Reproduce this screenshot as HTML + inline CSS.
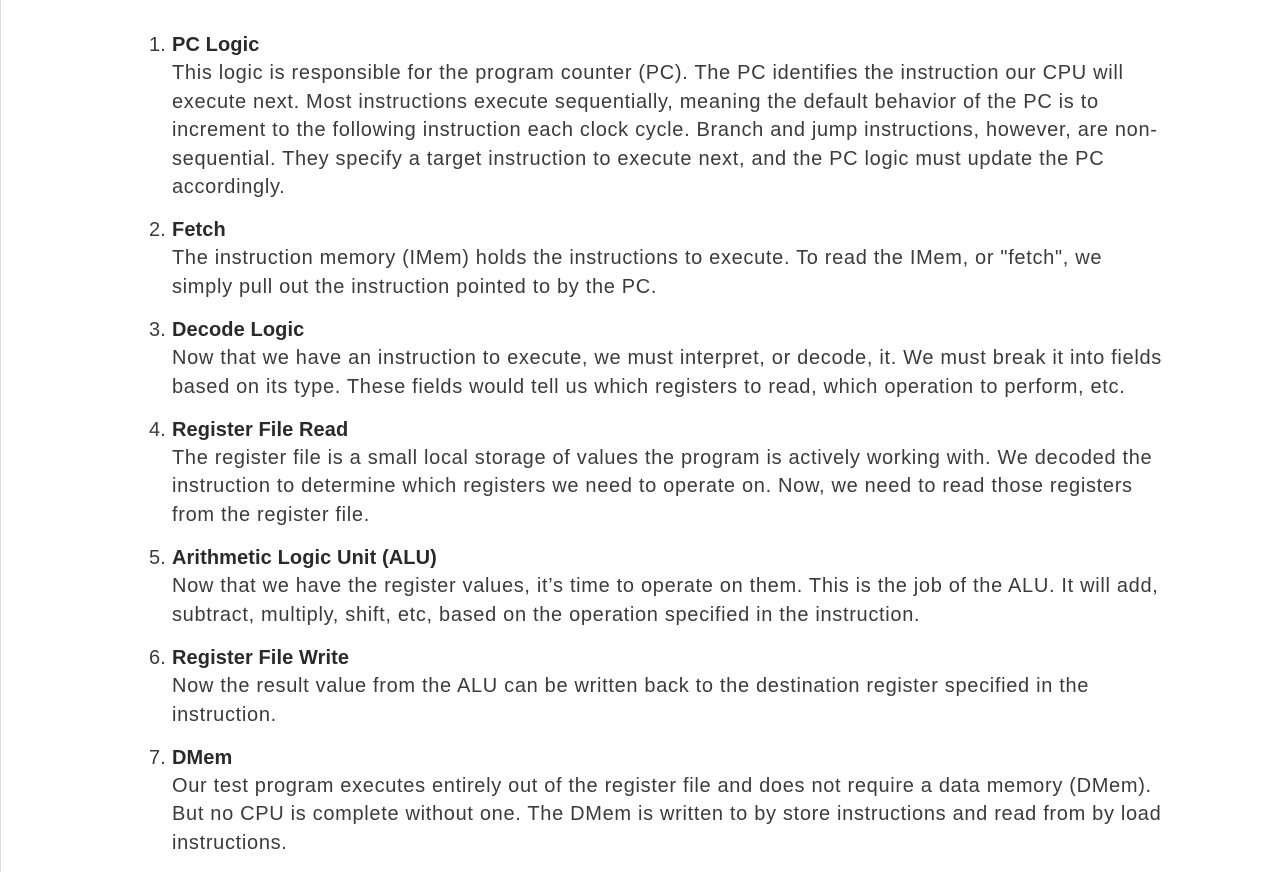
<!DOCTYPE html>
<html><head><meta charset="utf-8"><style>
html,body{margin:0;padding:0;background:#fff;}
body{width:1281px;height:872px;overflow:hidden;border-left:1px solid #dcdcdc;box-sizing:border-box;font-family:"Liberation Sans",sans-serif;font-size:20px;line-height:28.4px;color:#3b3b3b;}
.wrap{position:absolute;left:0;top:31px;}
.item{position:relative;padding-left:172px;margin-bottom:14.6px;white-space:nowrap;letter-spacing:0.68px;}
.num{position:absolute;left:0;width:166px;text-align:right;letter-spacing:0.15px;}
.t{font-weight:bold;color:#2a2a2a;letter-spacing:0.1px;}
</style></head><body><div class="wrap">
<div class="item"><span class="num">1.</span><span class="t">PC Logic</span><br>This logic is responsible for the program counter (PC). The PC identifies the instruction our CPU will<br>execute next. Most instructions execute sequentially, meaning the default behavior of the PC is to<br>increment to the following instruction each clock cycle. Branch and jump instructions, however, are non-<br>sequential. They specify a target instruction to execute next, and the PC logic must update the PC<br>accordingly.</div>
<div class="item"><span class="num">2.</span><span class="t">Fetch</span><br>The instruction memory (IMem) holds the instructions to execute. To read the IMem, or "fetch", we<br>simply pull out the instruction pointed to by the PC.</div>
<div class="item"><span class="num">3.</span><span class="t">Decode Logic</span><br>Now that we have an instruction to execute, we must interpret, or decode, it. We must break it into fields<br>based on its type. These fields would tell us which registers to read, which operation to perform, etc.</div>
<div class="item"><span class="num">4.</span><span class="t">Register File Read</span><br>The register file is a small local storage of values the program is actively working with. We decoded the<br>instruction to determine which registers we need to operate on. Now, we need to read those registers<br>from the register file.</div>
<div class="item"><span class="num">5.</span><span class="t">Arithmetic Logic Unit (ALU)</span><br>Now that we have the register values, it’s time to operate on them. This is the job of the ALU. It will add,<br>subtract, multiply, shift, etc, based on the operation specified in the instruction.</div>
<div class="item"><span class="num">6.</span><span class="t">Register File Write</span><br>Now the result value from the ALU can be written back to the destination register specified in the<br>instruction.</div>
<div class="item"><span class="num">7.</span><span class="t">DMem</span><br>Our test program executes entirely out of the register file and does not require a data memory (DMem).<br>But no CPU is complete without one. The DMem is written to by store instructions and read from by load<br>instructions.</div>
</div></body></html>
